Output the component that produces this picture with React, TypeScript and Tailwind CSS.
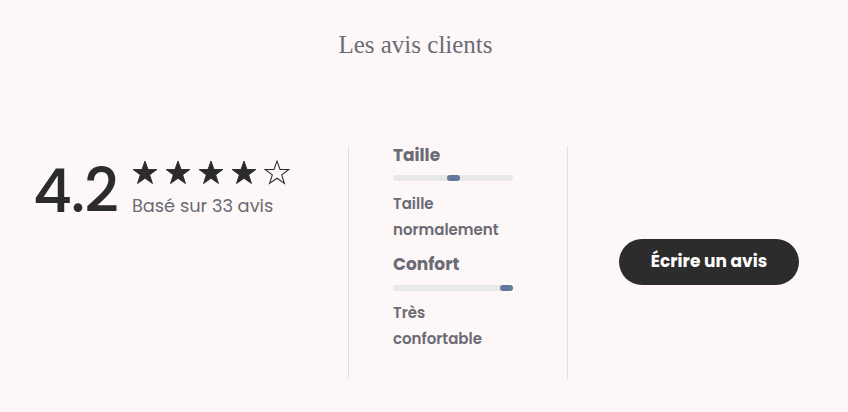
import React from "react";

const Star = ({ filled }: { filled: boolean }) => (
  <svg width="28" height="28" viewBox="0 0 24 24" className="shrink-0">
    <polygon
      points="12,1.8 14.6,9 22.2,9 16,13.6 18.4,21 12,16.5 5.6,21 8,13.6 1.8,9 9.4,9"
      fill={filled ? "#2b2b2b" : "none"}
      stroke="#2b2b2b"
      strokeWidth={filled ? 0.8 : 0.9}
      strokeLinejoin="miter"
    />
  </svg>
);

const Bar = ({ pos }: { pos: number }) => (
  <div className="relative h-[6px] w-[120px] rounded-full bg-[#e8e8e8]">
    <div
      className="absolute top-0 h-[6px] w-[13px] rounded-full bg-[#60799c]"
      style={{ left: `${pos}px` }}
    />
  </div>
);

export default function App() {
  return (
    <div
      className="min-h-[412px] w-full bg-[#fdf7f7]"
      style={{ fontFamily: "Poppins, Inter, 'Noto Sans', sans-serif" }}
    >
      <h2
        className="pr-[17px] pt-[29px] text-center text-[25px] leading-[32px] text-[#6b6b75]"
        style={{ fontFamily: "'Liberation Serif', serif" }}
      >
        Les avis clients
      </h2>
      <div className="mt-[85px] flex">
        <div className="flex w-[348px] items-start pl-[33px] pt-[10px]">
          <div className="text-[60px] font-medium leading-[70px] tracking-[-1px] text-[#2b2b2b]">
            4.2
          </div>
          <div className="ml-[13px] flex flex-col pt-[3px]">
            <div className="flex gap-[5px]">
              <Star filled />
              <Star filled />
              <Star filled />
              <Star filled />
              <Star filled={false} />
            </div>
            <div className="ml-[1px] mt-[7px] text-[17.8px] leading-[24px] text-[#6b6b75]">
              Basé sur 33 avis
            </div>
          </div>
        </div>
        <div className="h-[233px] w-px bg-[#e2dede]" />
        <div className="flex w-[218px] flex-col pl-[44px] text-[#6b6b75]">
          <div className="mt-[-3px] text-[17px] font-bold leading-[24px]">Taille</div>
          <div className="mt-[8px]">
            <Bar pos={54} />
          </div>
          <div className="mt-[10px] text-[15px] font-semibold leading-[26px]">
            Taille
            <br />
            normalement
          </div>
          <div className="mt-[9px] text-[17px] font-bold leading-[24px]">Confort</div>
          <div className="mt-[9px]">
            <Bar pos={107} />
          </div>
          <div className="mt-[9px] text-[15px] font-semibold leading-[26px]">
            Très
            <br />
            confortable
          </div>
        </div>
        <div className="h-[233px] w-px bg-[#e2dede]" />
        <div className="flex flex-1 items-center justify-center pb-[2px] pl-[2px]">
          <button className="h-[46px] w-[180px] rounded-full bg-[#2c2c2c] text-[17px] font-bold text-white">
            Écrire un avis
          </button>
        </div>
      </div>
    </div>
  );
}
